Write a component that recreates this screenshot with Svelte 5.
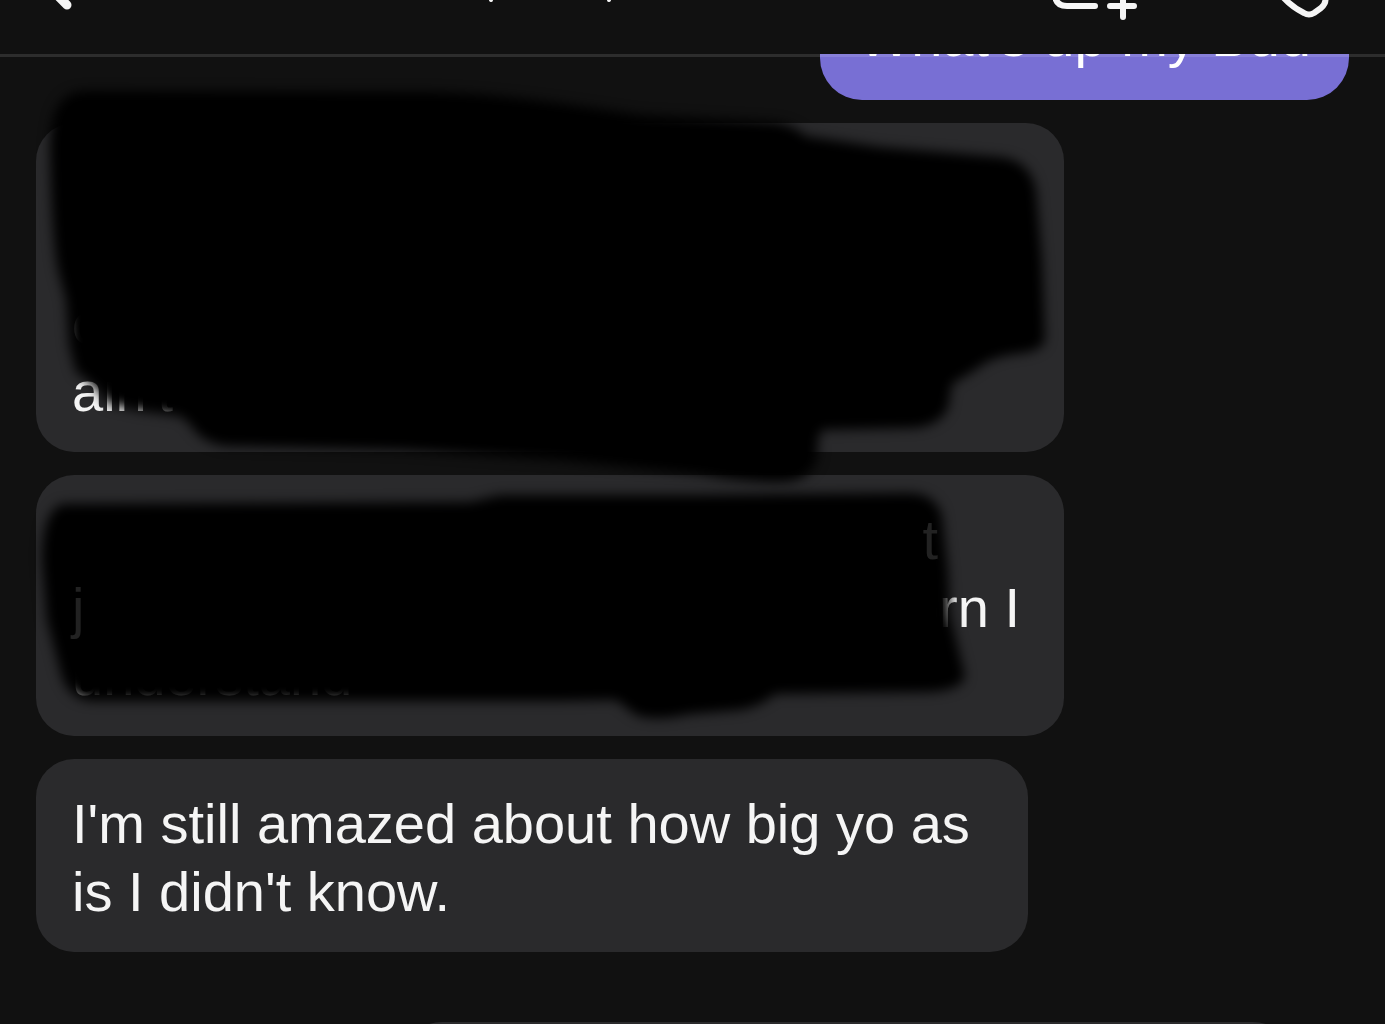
<script>
  const latest = "I'm still amazed about how big yo as is I didn't know.";
  let draft = $state("");
</script>

<div class="chat">
  <header class="topbar">
    <button class="icon-btn" aria-label="Back">
      <svg width="40" height="54" viewBox="0 0 40 54">
        <path d="M6 -20 L31 5" stroke-width="9" />
      </svg>
    </button>
    <svg class="title-marks" width="124" height="54" viewBox="0 0 124 54" aria-hidden="true">
      <path d="M5 -8 L3 0 M119 -8 L121 0" stroke-width="4" />
    </svg>
    <div class="actions">
      <button class="icon-btn" aria-label="Start video call">
        <svg width="86" height="54" viewBox="0 0 86 54">
          <path d="M2 -30 V-6 Q2 6 14 6 H42" stroke-width="6" />
          <path d="M57 6 H81 M70 -8 V17" stroke-width="6" />
        </svg>
      </button>
      <button class="icon-btn" aria-label="Call">
        <svg width="50" height="54" viewBox="0 0 50 54">
          <path d="M1 -4 C8 4 17 10 23 13 Q28 16 33 13 L40 8 Q46 3 44 -4" stroke-width="6" />
        </svg>
      </button>
    </div>
  </header>

  <main class="messages">
    <div class="bubble sent">What's up my Bud</div>

    <div class="bubble received wide">
      <div class="line"></div>
      <div class="line"></div>
      <div class="line">o</div>
      <div class="line">ain't</div>
      <svg class="scribble" width="1028" height="329" viewBox="36 123 1028 329" aria-hidden="true">
        <path
          d="M50 150 C50 115 58 92 85 91 L430 92 C500 94 560 103 640 115 L775 122
             Q792 124 806 136 L880 147 L1000 157 Q1030 160 1036 190 L1042 260 L1045 340
             Q1042 352 1015 354 Q990 357 975 370 L952 384 L948 408 Q940 425 915 428
             L822 430 Q816 440 818 455 Q812 482 780 482 Q740 482 700 474 L560 460
             L400 450 L225 446 Q200 442 190 424 L180 416 L140 411 L108 404
             Q98 386 76 372 L69 345 L66 300 L58 270 Q52 240 50 150 Z"
        />
      </svg>
    </div>

    <div class="bubble received wide">
      <div class="line end inset"><span class="faint">t</span></div>
      <div class="line split"><span class="faint">j</span><span>orn I</span></div>
      <div class="line">understand</div>
      <svg class="scribble" width="1028" height="262" viewBox="36 475 1028 262" aria-hidden="true">
        <path
          d="M42 560 Q42 512 62 504 L470 502 L500 495 L700 495 L910 493 Q936 494 942 516
             L948 570 L950 615 L965 676 Q962 690 930 692 L775 694 Q762 706 740 710
             L690 714 Q655 722 636 715 L616 700 L560 701 L90 701 Q66 698 60 670
             L47 620 Z"
        />
      </svg>
    </div>

    <div class="bubble received">{latest}</div>
  </main>

  <footer class="composer">
    <input type="text" aria-label="Message" bind:value={draft} />
  </footer>
</div>

<style>
  :global(body) {
    margin: 0;
    background: #111111;
  }

  .chat {
    display: flex;
    flex-direction: column;
    height: 100vh;
    overflow: hidden;
    background: #111111;
    color: #f5f5f5;
    font-family: "Liberation Sans", Arial, sans-serif;
    font-size: 56px;
    line-height: 68px;
  }

  .topbar {
    position: relative;
    z-index: 2;
    display: flex;
    flex: none;
    justify-content: space-between;
    height: 54px;
    padding: 0 54px 0 36px;
    background: #111111;
  }

  .topbar::after {
    content: "";
    position: absolute;
    top: 100%;
    left: 0;
    right: 0;
    height: 3px;
    background: rgba(255, 255, 255, 0.12);
  }

  .topbar svg {
    display: block;
    fill: none;
    stroke: #f5f5f5;
    stroke-linecap: round;
    stroke-linejoin: round;
  }

  .title-marks {
    margin-left: 412px;
    margin-right: auto;
  }

  .actions {
    display: flex;
    gap: 142px;
  }

  .icon-btn {
    height: 54px;
    padding: 0;
    border: none;
    background: none;
    cursor: pointer;
  }

  .messages {
    display: flex;
    flex: none;
    flex-direction: column;
    align-items: flex-start;
    gap: 23px;
    margin-top: -80px;
    padding: 0 36px;
  }

  .bubble {
    position: relative;
    box-sizing: border-box;
    padding: 31px 36px 26px;
    border-radius: 38px;
  }

  .received {
    width: calc(100% - 321px);
    background: #2a2a2c;
  }

  .received.wide {
    width: calc(100% - 285px);
  }

  .sent {
    align-self: flex-end;
    padding: 29px 38px;
    border-radius: 42px;
    background: #786fd4;
    color: #ffffff;
  }

  .line {
    display: flex;
    height: 68px;
    white-space: pre;
  }

  .line.end {
    justify-content: flex-end;
  }

  .line.inset {
    padding-right: 90px;
  }

  .line.split {
    justify-content: space-between;
    padding-right: 8px;
  }

  .faint {
    position: relative;
    z-index: 2;
    color: #222222;
  }

  .scribble {
    position: absolute;
    top: 0;
    left: 0;
    z-index: 1;
    overflow: visible;
    pointer-events: none;
  }

  .scribble path {
    fill: #000000;
    filter: blur(6px);
  }

  .composer {
    display: flex;
    flex: none;
    margin-top: 70px;
    padding: 0 90px 0 400px;
  }

  .composer input {
    flex: 1;
    height: 84px;
    padding: 0 36px;
    border: none;
    border-radius: 42px;
    outline: none;
    background: #2a2a2c;
    color: #f5f5f5;
    font: inherit;
  }
</style>
